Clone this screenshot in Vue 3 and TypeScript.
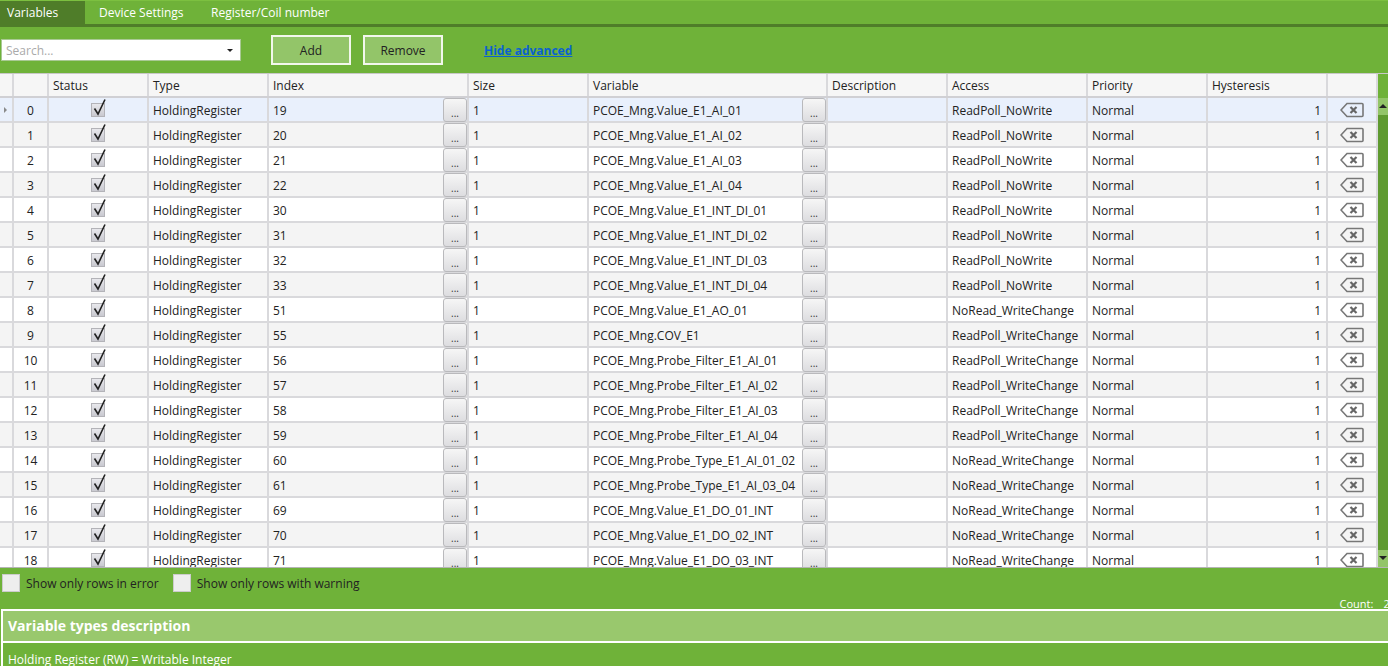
<script setup lang="ts">
interface Row {
  index: number;
  variable: string;
  access: string;
}

const rows: Row[] = [
  { index: 19, variable: "PCOE_Mng.Value_E1_AI_01", access: "ReadPoll_NoWrite" },
  { index: 20, variable: "PCOE_Mng.Value_E1_AI_02", access: "ReadPoll_NoWrite" },
  { index: 21, variable: "PCOE_Mng.Value_E1_AI_03", access: "ReadPoll_NoWrite" },
  { index: 22, variable: "PCOE_Mng.Value_E1_AI_04", access: "ReadPoll_NoWrite" },
  { index: 30, variable: "PCOE_Mng.Value_E1_INT_DI_01", access: "ReadPoll_NoWrite" },
  { index: 31, variable: "PCOE_Mng.Value_E1_INT_DI_02", access: "ReadPoll_NoWrite" },
  { index: 32, variable: "PCOE_Mng.Value_E1_INT_DI_03", access: "ReadPoll_NoWrite" },
  { index: 33, variable: "PCOE_Mng.Value_E1_INT_DI_04", access: "ReadPoll_NoWrite" },
  { index: 51, variable: "PCOE_Mng.Value_E1_AO_01", access: "NoRead_WriteChange" },
  { index: 55, variable: "PCOE_Mng.COV_E1", access: "ReadPoll_WriteChange" },
  { index: 56, variable: "PCOE_Mng.Probe_Filter_E1_AI_01", access: "ReadPoll_WriteChange" },
  { index: 57, variable: "PCOE_Mng.Probe_Filter_E1_AI_02", access: "ReadPoll_WriteChange" },
  { index: 58, variable: "PCOE_Mng.Probe_Filter_E1_AI_03", access: "ReadPoll_WriteChange" },
  { index: 59, variable: "PCOE_Mng.Probe_Filter_E1_AI_04", access: "ReadPoll_WriteChange" },
  { index: 60, variable: "PCOE_Mng.Probe_Type_E1_AI_01_02", access: "NoRead_WriteChange" },
  { index: 61, variable: "PCOE_Mng.Probe_Type_E1_AI_03_04", access: "NoRead_WriteChange" },
  { index: 69, variable: "PCOE_Mng.Value_E1_DO_01_INT", access: "NoRead_WriteChange" },
  { index: 70, variable: "PCOE_Mng.Value_E1_DO_02_INT", access: "NoRead_WriteChange" },
  { index: 71, variable: "PCOE_Mng.Value_E1_DO_03_INT", access: "NoRead_WriteChange" },
];

const headers = ["", "", "Status", "Type", "Index", "Size", "Variable", "Description", "Access", "Priority", "Hysteresis", ""];
</script>

<template>
  <div class="page">
    <nav class="tabs">
      <div class="tab active">Variables</div>
      <div class="tab settings">Device Settings</div>
      <div class="tab register">Register/Coil number</div>
    </nav>

    <div class="toolbar">
      <div class="search">
        <span>Search...</span>
        <i class="caret"></i>
      </div>
      <button class="btn add">Add</button>
      <button class="btn">Remove</button>
      <a class="link">Hide advanced</a>
    </div>

    <div class="grid-wrap">
      <div class="grid">
        <div class="row head">
          <div v-for="(h, i) in headers" :key="i" class="cell">{{ h }}</div>
        </div>
        <div
          v-for="(row, i) in rows"
          :key="i"
          class="row"
          :class="{ selected: i === 0, alt: i % 2 === 1 }"
        >
          <div class="cell gutter"><i v-if="i === 0" class="pointer"></i></div>
          <div class="cell num">{{ i }}</div>
          <div class="cell center">
            <span class="check">
              <svg width="20" height="20" viewBox="0 0 20 20">
                <path d="M5.5 10.5 L9 16 L16 1.5" fill="none" stroke="#222" stroke-width="1.6" />
              </svg>
            </span>
          </div>
          <div class="cell">HoldingRegister</div>
          <div class="cell with-btn">{{ row.index }}<button class="dots">...</button></div>
          <div class="cell">1</div>
          <div class="cell with-btn">{{ row.variable }}<button class="dots">...</button></div>
          <div class="cell"></div>
          <div class="cell">{{ row.access }}</div>
          <div class="cell">Normal</div>
          <div class="cell right">1</div>
          <div class="cell center">
            <svg width="24" height="16" viewBox="0 0 24 16">
              <path d="M7 1.5 H22 a1 1 0 0 1 1 1 V13.5 a1 1 0 0 1 -1 1 H7 L1 8 Z" fill="none" stroke="#777" stroke-width="1.6" />
              <path d="M10.5 5 L16.5 11 M16.5 5 L10.5 11" stroke="#666" stroke-width="2.2" />
            </svg>
          </div>
        </div>
      </div>
      <div class="scrollbar">
        <div class="arrow-box"><i class="up"></i></div>
        <div class="track"></div>
        <div class="arrow-box"><i class="down"></i></div>
      </div>
    </div>

    <div class="filters">
      <label class="filter"><span class="box"></span>Show only rows in error</label>
      <label class="filter"><span class="box"></span>Show only rows with warning</label>
    </div>
    <div class="count"><span>Count:</span><span>20</span></div>

    <section class="desc">
      <h2>Variable types description</h2>
      <p>Holding Register (RW) = Writable Integer</p>
    </section>
  </div>
</template>

<style>
html,
body {
  margin: 0;
  overflow: hidden;
}
</style>

<style scoped>
.page {
  width: 1388px;
  height: 666px;
  overflow: hidden;
  background: #6fb239;
  font-family: "Open Sans", "Noto Sans", sans-serif;
  font-size: 12px;
  color: #222;
}

.tabs {
  display: flex;
  height: 23px;
  margin-top: 0;
  border-top: 1px solid #7cc040;
  border-bottom: 3px solid #4f7d29;
  box-sizing: content-box;
}

.tab {
  color: #fff;
  line-height: 23px;
}

.tab.active {
  width: 78px;
  padding-left: 7px;
  background: #4f7d29;
}

.tab.settings {
  margin-left: 14px;
  width: 112px;
}

.tab.register {
  margin-left: 0;
}

.toolbar {
  display: flex;
  align-items: center;
  height: 46px;
}

.search {
  box-sizing: border-box;
  display: flex;
  align-items: center;
  justify-content: space-between;
  width: 240px;
  height: 22px;
  margin-left: 1px;
  padding: 0 4px;
  background: #fff;
  border: 1px solid #a9c994;
  color: #aaa;
}

.caret {
  width: 0;
  height: 0;
  margin-right: 3px;
  border-left: 3px solid transparent;
  border-right: 3px solid transparent;
  border-top: 3px solid #222;
}

.btn {
  box-sizing: border-box;
  width: 80px;
  height: 30px;
  margin-left: 12px;
  padding: 0;
  background: #93c569;
  border: 2px solid #f2f7ec;
  font: inherit;
  color: #222;
}

.btn.add {
  margin-left: 30px;
}

.link {
  margin-left: 41px;
  color: #0a62d0;
  font-weight: 700;
  text-decoration: underline;
}

.grid-wrap {
  display: flex;
  height: 495px;
  border-top: 1px solid #c8c8c8;
  overflow: hidden;
  border-bottom: 1px solid #b5b5b5;
  box-sizing: border-box;
}

.grid {
  width: 1378px;
  background: #fff;
}

.row {
  display: grid;
  grid-template-columns: 14px 35px 100px 120px 200px 120px 239px 120px 140px 120px 120px 50px;
  height: 25px;
  box-sizing: border-box;
  border-bottom: 2px solid #d9d9dc;
  background: #fff;
}

.row.alt {
  background: #f4f4f4;
}

.row.selected {
  background: #e9f0fc;
}

.row.head {
  height: 24px;
  background: #f6f6f6;
  border-bottom: 2px solid #d0d0d4;
}

.cell {
  position: relative;
  box-sizing: border-box;
  display: flex;
  align-items: center;
  padding-left: 4px;
  border-right: 2px solid #d9d9dc;
  white-space: nowrap;
  line-height: 1;
  padding-top: 3px;
}

.head .cell {
  padding-top: 1px;
}

.cell.num {
  justify-content: center;
  padding-left: 0;
}

.cell.center {
  justify-content: center;
  padding: 0;
}

.cell.right {
  justify-content: flex-end;
  padding-right: 5px;
}

.with-btn {
  justify-content: space-between;
}

.gutter {
  padding: 0;
}

.pointer {
  margin-left: 4px;
  border-top: 3px solid transparent;
  border-bottom: 3px solid transparent;
  border-left: 3px solid #8a8a8a;
}

.check {
  box-sizing: border-box;
  position: relative;
  width: 14px;
  height: 14px;
  background: linear-gradient(#e8e8ec, #c9c9d0);
  border: 1px solid #b3b3b8;
}

.check svg {
  position: absolute;
  left: -3px;
  top: -6px;
}

.dots {
  position: absolute;
  right: 0;
  top: 0;
  box-sizing: border-box;
  width: 24px;
  height: 24px;
  padding: 6px 0 0;
  background: linear-gradient(#f6f6f6, #dddde0);
  border: 1px solid #b9b9bc;
  border-radius: 3px;
  font: inherit;
  font-size: 10px;
  color: #333;
}

.scrollbar {
  display: flex;
  flex-direction: column;
  width: 10px;
  padding-top: 24px;
  background: #6fb239;
}

.arrow-box {
  height: 17px;
  background: #93c569;
  position: relative;
}

.track {
  flex: 1;
  background: #5f9a30;
}

.up,
.down {
  position: absolute;
  left: 1px;
  top: 6px;
  border-left: 4px solid transparent;
  border-right: 4px solid transparent;
}

.up {
  border-bottom: 4px solid #222;
}

.down {
  border-top: 4px solid #222;
}

.filters {
  display: flex;
  height: 30px;
  align-items: center;
  gap: 14px;
  padding-left: 2px;
}

.filter {
  display: flex;
  align-items: center;
  gap: 6px;
}

.box {
  box-sizing: border-box;
  width: 18px;
  height: 18px;
  background: #eee;
  border: 1px solid #ccc;
}

.count {
  display: flex;
  justify-content: flex-end;
  gap: 10px;
  height: 11px;
  line-height: 11px;
  margin-right: -8px;
  color: #fff;
  font-size: 11px;
  overflow: visible;
}

.desc {
  margin: 0 0 0 1px;
  border-top: 2px solid #fff;
  border-left: 2px solid #fff;
  color: #fff;
}

.desc h2 {
  height: 30px;
  margin: 0;
  padding-left: 5px;
  background: #99c86d;
  border-bottom: 2px solid #fff;
  font-size: 14px;
  font-weight: 700;
  line-height: 30px;
}

.desc p {
  margin: 0;
  padding-left: 5px;
  line-height: 33px;
}
</style>
